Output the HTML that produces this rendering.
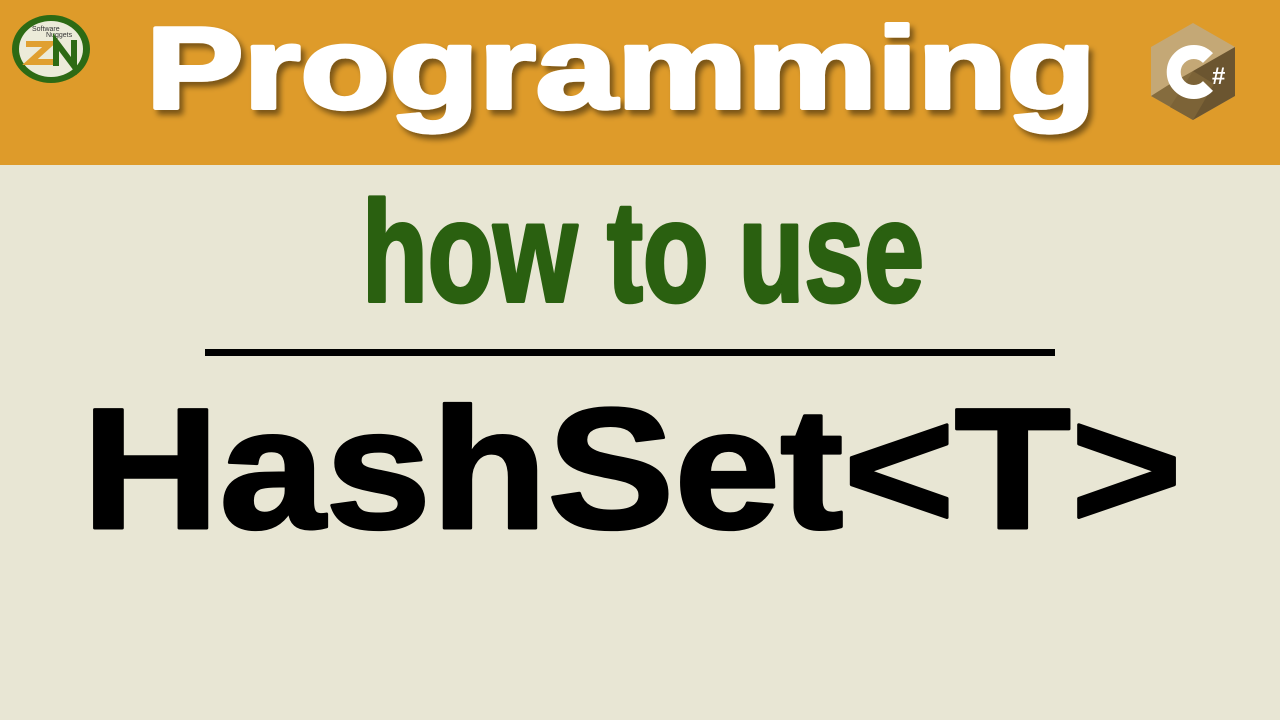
<!DOCTYPE html>
<html><head><style>
body{margin:0;width:1280px;height:720px;background:#e8e6d4;overflow:hidden;font-family:"Liberation Sans",sans-serif}
</style></head><body>
<svg width="1280" height="720" style="position:absolute;left:0;top:0">
<defs><filter id="sh" x="-10%" y="-10%" width="120%" height="130%"><feDropShadow dx="4" dy="5" stdDeviation="3" flood-color="#000" flood-opacity="0.45"/></filter></defs>
<rect x="0" y="0" width="1280" height="165" fill="#de9b2a"/>
<!-- SN logo -->
<ellipse cx="51" cy="49" rx="39" ry="34" fill="#2d6a14"/>
<ellipse cx="51" cy="49" rx="32" ry="28" fill="#ecebd9"/>
<text x="32" y="31" font-size="7" fill="#333">Software</text>
<text x="46" y="37" font-size="7" fill="#333">Nuggets</text>
<path d="M26 44 H50 L30 62 H54" stroke="#e0a030" stroke-width="6" fill="none"/>
<path d="M56 66 V42 L74 66 V40" stroke="#2d6a14" stroke-width="6" fill="none"/>
<text x="146" y="108" font-size="116" font-weight="bold" fill="#fff" stroke="#fff" stroke-width="4" stroke-linejoin="round" textLength="950" lengthAdjust="spacingAndGlyphs" filter="url(#sh)">Programming</text>
<!-- C# logo -->
<polygon points="1193,23 1235,47 1235,96 1193,120 1151,96 1151,47" fill="#c4a876"/>
<polygon points="1235,47 1235,96 1193,120 1170,107 1193,71" fill="#6b5530"/>
<polygon points="1193,120 1151,96 1170,84 1193,71 1214,84" fill="#7e6538" opacity="0.9"/>
<path d="M1208 58 A20 20 0 1 0 1208 86" stroke="#fff" stroke-width="14" fill="none"/>
<text x="1212" y="84" font-size="24" font-weight="bold" fill="#fff">#</text>
<text x="362" y="301" font-size="143" font-weight="bold" fill="#2a6010" stroke="#2a6010" stroke-width="4" stroke-linejoin="round" textLength="562" lengthAdjust="spacingAndGlyphs">how to use</text>
<rect x="205" y="349" width="850" height="7" fill="#000"/>
<text x="82" y="528" font-size="172" font-weight="bold" fill="#000" stroke="#000" stroke-width="3" stroke-linejoin="round" textLength="1100" lengthAdjust="spacingAndGlyphs">HashSet&lt;T&gt;</text>
</svg>
</body></html>
